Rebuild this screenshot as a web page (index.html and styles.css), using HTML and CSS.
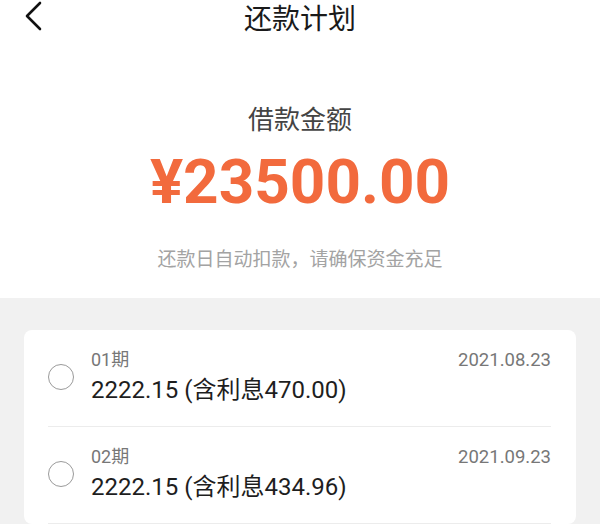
FILE: index.html
```html
<!DOCTYPE html>
<html>
<head>
<meta charset="utf-8">
<link rel="stylesheet" href="styles.css">
</head>
<body>
<div class="topbar">
  <div class="back">
    <svg width="20" height="32" viewBox="0 0 20 32"><polyline points="16,3 3,16 16,29" fill="none" stroke="#111" stroke-width="2.6" stroke-linecap="round" stroke-linejoin="round"/></svg>
  </div>
  <div class="title">还款计划</div>
  <div></div>
</div>

<div class="summary">
  <div class="label">借款金额</div>
  <div class="amount">¥23500.00</div>
  <div class="note">还款日自动扣款，请确保资金充足</div>
</div>

<div class="plan">
  <div class="card">
    <div class="row">
      <span class="radio"></span>
      <div class="info">
        <div class="period">01期</div>
        <div class="money">2222.15 (含利息470.00)</div>
      </div>
      <div class="date">2021.08.23</div>
    </div>
    <div class="row">
      <span class="radio"></span>
      <div class="info">
        <div class="period">02期</div>
        <div class="money">2222.15 (含利息434.96)</div>
      </div>
      <div class="date">2021.09.23</div>
    </div>
  </div>
</div>
</body>
</html>
```
FILE: styles.css
```css
body {
  margin: 0;
  background: #fff;
  font-family: Roboto, "Noto Sans CJK SC", sans-serif;
  color: #222;
}

/* top bar */
.topbar {
  display: grid;
  grid-template-columns: 1fr auto 1fr;
  align-items: start;
  height: 34px;
}
.back {
  padding-left: 24px;
  display: flex;
}
.title {
  font-family: "Noto Sans CJK SC", sans-serif;
  font-size: 28px;
  line-height: 34px;
  color: #1a1a1a;
}

/* loan summary */
.summary {
  text-align: center;
  padding: 66px 0 27px 0;
}
.label {
  font-family: "Noto Sans CJK SC", sans-serif;
  font-size: 26px;
  line-height: 36px;
  color: #444;
}
.amount {
  margin-top: 10px;
  font-size: 62px;
  font-weight: bold;
  line-height: 72px;
  color: #f26a3d;
}
.note {
  margin-top: 27px;
  font-family: "Noto Sans CJK SC", sans-serif;
  font-size: 19px;
  line-height: 26px;
  color: #a3a3a3;
}

/* repayment list */
.plan {
  background: #f1f1f1;
  padding: 32px 24px 0 24px;
  height: 194px;
  overflow: hidden;
}
.card {
  background: #fff;
  border-radius: 8px;
  padding: 0 25px 0 24px;
}
.row {
  display: flex;
  align-items: center;
  padding: 17px 0 19px 0;
  border-bottom: 1px solid #ececec;
}
.radio {
  width: 24px;
  height: 24px;
  border: 1.6px solid #9a9a9a;
  border-radius: 50%;
  flex: none;
}
.info {
  flex: 1;
  margin-left: 17px;
}
.period {
  font-size: 18px;
  line-height: 26px;
  color: #777;
}
.money {
  font-size: 24px;
  line-height: 34px;
  color: #1e1e1e;
}
.date {
  align-self: flex-start;
  font-size: 18.5px;
  line-height: 26px;
  color: #777;
}
```
